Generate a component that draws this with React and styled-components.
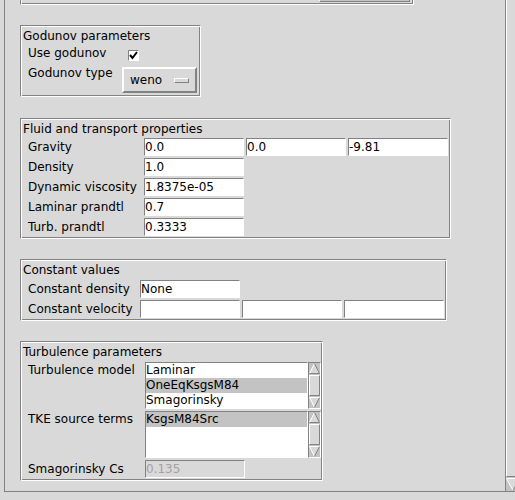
import React from "react";
import styled, { createGlobalStyle } from "styled-components";

const BG = "#d9d9d9";
const DARK = "#828282";
const LIGHT = "#ffffff";
const TROUGH = "#c3c3c3";

const Global = createGlobalStyle`
  html, body { margin: 0; padding: 0; background: ${BG}; }
  body { font-family: "DejaVu Sans", sans-serif; font-size: 12px; color: #000; }
  * { box-sizing: border-box; }
`;

const Screen = styled.div`
  width: 515px;
  height: 500px;
  background: ${BG};
  overflow: hidden;
`;

const Viewport = styled.div`
  margin-left: 4px;
  width: 511px;
  height: 492px;
  border-left: 1px solid ${DARK};
  border-bottom: 1px solid ${DARK};
  display: flex;
  overflow: hidden;
`;

const Canvas = styled.div`
  flex: 0 0 500px;
  display: flex;
  flex-direction: column;
  align-items: flex-start;
  padding-left: 15px;
  overflow: hidden;
`;

const TopTail = styled.div`
  width: 394px;
  height: 5px;
  border: 1px solid;
  border-top: none;
  border-color: ${DARK} ${LIGHT} ${LIGHT} ${DARK};
  box-shadow: inset 1px 0 0 ${LIGHT}, inset -1px -1px 0 ${DARK};
  display: flex;
`;

const TailWidget = styled.div`
  margin-left: 298px;
  width: 91px;
  height: 2px;
  border-bottom: 1px solid ${DARK};
  border-left: 1px solid ${LIGHT};
  border-right: 1px solid ${DARK};
  background: ${TROUGH};
`;

const Group = styled.div`
  margin-top: ${(p) => p.$top}px;
  border: 1px solid;
  border-color: ${DARK} ${LIGHT} ${LIGHT} ${DARK};
  box-shadow: inset 1px 1px 0 ${LIGHT}, inset -1px -1px 0 ${DARK};
  padding: 1px;
  display: flex;
  flex-direction: column;
`;

const Title = styled.div`
  height: 14px;
  line-height: 14px;
  margin: 2px 0 ${(p) => p.$mb}px 1px;
  white-space: nowrap;
`;

const Row = styled.div`
  display: flex;
  align-items: flex-start;
  height: ${(p) => p.$h}px;
`;

const RowLabel = styled.div`
  width: ${(p) => p.$w}px;
  flex: 0 0 auto;
  padding-left: 6px;
  margin-top: ${(p) => p.$mt}px;
  height: 14px;
  line-height: 14px;
  white-space: nowrap;
`;

const Check = styled.div`
  margin: 7px 0 0 6px;
  width: 11px;
  height: 11px;
  background: #fff;
  border: 1px solid;
  border-color: ${DARK} ${LIGHT} ${LIGHT} ${DARK};
  display: flex;
  align-items: center;
  justify-content: center;
`;

const MenuButton = styled.div`
  margin-top: 3px;
  width: 75px;
  height: 26px;
  border: 2px solid;
  border-color: ${LIGHT} ${DARK} ${DARK} ${LIGHT};
  display: flex;
  align-items: center;
  padding-left: 6px;
  line-height: 14px;
`;

const Indicator = styled.div`
  margin-left: auto;
  margin-right: 6px;
  width: 15px;
  height: 5px;
  border: 1px solid;
  border-color: ${LIGHT} ${DARK} ${DARK} ${LIGHT};
  background: ${BG};
`;

const Spacer = styled.div`
  width: ${(p) => p.$w}px;
  flex: 0 0 auto;
`;

const Form = styled.div`
  display: grid;
  grid-template-columns: ${(p) => p.$first}px repeat(3, 102px);
  grid-auto-rows: 20px;
  align-items: center;
`;

const FieldLabel = styled.div`
  grid-column: 1;
  padding-left: 6px;
  height: 14px;
  line-height: 14px;
  white-space: nowrap;
  align-self: ${(p) => (p.$top ? "start" : "center")};
  margin-top: ${(p) => (p.$top ? 2 : 0)}px;
`;

const EntryRing = styled.div`
  width: 102px;
  height: 20px;
  padding: 1px;
`;

const EntryBox = styled.div`
  width: 100%;
  height: 100%;
  border: 1px solid;
  border-color: ${DARK} ${LIGHT} ${LIGHT} ${DARK};
  background: ${(p) => (p.$disabled ? BG : "#fff")};
  color: ${(p) => (p.$disabled ? "#a3a3a3" : "#000")};
  line-height: 16px;
  padding-left: 0px;
  white-space: nowrap;
  overflow: hidden;
`;

const Entry = ({ value = "", disabled }) => (
  <EntryRing>
    <EntryBox $disabled={disabled}>{value}</EntryBox>
  </EntryRing>
);

const TurbForm = styled.div`
  display: grid;
  grid-template-columns: 122px 177px;
  grid-template-rows: 49px 49px 20px;
  align-items: center;
`;

const ListWrap = styled.div`
  display: flex;
  align-self: stretch;
  padding: 1px 0 1px 1px;
`;

const ListBox = styled.div`
  width: 163px;
  height: 47px;
  border: 1px solid;
  border-color: ${DARK} ${LIGHT} ${LIGHT} ${DARK};
  background: #fff;
  overflow: hidden;
`;

const ListItem = styled.div`
  height: 15px;
  line-height: 15px;
  padding-left: 0px;
  white-space: nowrap;
  background: ${(p) => (p.$sel ? TROUGH : "transparent")};
`;

const SBar = styled.div`
  width: 13px;
  height: 47px;
  border: 1px solid;
  border-color: ${DARK} ${LIGHT} ${LIGHT} ${DARK};
  background: ${TROUGH};
  display: flex;
  flex-direction: column;
`;

const Slider = styled.div`
  flex: 1;
  margin: 1px 0;
  background: ${BG};
  border: 1px solid;
  border-color: ${LIGHT} ${DARK} ${DARK} ${LIGHT};
`;

const PageScroll = styled.div`
  flex: 0 0 15px;
  height: 491px;
  border-left: 1px solid ${DARK};
  background: ${TROUGH};
  display: flex;
  flex-direction: column;
`;

const PageSlider = styled.div`
  flex: 1;
  background: ${BG};
  border: 1px solid;
  border-top: none;
  border-color: ${LIGHT} ${DARK} ${DARK} ${LIGHT};
  margin-bottom: 1px;
`;

function Arrow({ dir, w = 11, h = 11 }) {
  const up = dir === "up";
  const tip = up ? [w / 2, 0.5] : [w / 2, h - 0.5];
  const a = up ? [0.5, h - 0.5] : [0.5, 0.5];
  const b = up ? [w - 0.5, h - 0.5] : [w - 0.5, 0.5];
  return (
    <svg width={w} height={h} viewBox={`0 0 ${w} ${h}`} style={{ display: "block", flex: "0 0 auto" }}>
      <polygon points={`${tip} ${a} ${b}`} fill={BG} />
      <line x1={a[0]} y1={a[1]} x2={tip[0]} y2={tip[1]} stroke={LIGHT} strokeWidth="1" />
      <line x1={b[0]} y1={b[1]} x2={tip[0]} y2={tip[1]} stroke={DARK} strokeWidth="1" />
      <line x1={a[0]} y1={a[1]} x2={b[0]} y2={b[1]} stroke={up ? DARK : LIGHT} strokeWidth="1" />
    </svg>
  );
}

const Scrollbar = () => (
  <SBar>
    <Arrow dir="up" />
    <Slider />
    <Arrow dir="down" />
  </SBar>
);

const CheckMark = () => (
  <svg width="9" height="9" viewBox="0 0 9 9" style={{ display: "block" }}>
    <polyline points="1,4 3.5,7 8,1" fill="none" stroke="#000" strokeWidth="2" />
  </svg>
);

export default function App() {
  return (
    <Screen>
      <Global />
      <Viewport>
        <Canvas>
          <TopTail>
            <TailWidget />
          </TopTail>

          <Group $top={20}>
            <Title $mb={0}>Godunov parameters</Title>
            <Row $h={21}>
              <RowLabel $w={100} $mt={3}>Use godunov</RowLabel>
              <Check>
                <CheckMark />
              </Check>
            </Row>
            <Row $h={31}>
              <RowLabel $w={100} $mt={2}>Godunov type</RowLabel>
              <MenuButton>
                <span>weno</span>
                <Indicator />
              </MenuButton>
              <Spacer $w={2} />
            </Row>
          </Group>

          <Group $top={21}>
            <Title $mb={1}>Fluid and transport properties</Title>
            <Form $first={121}>
              <FieldLabel>Gravity</FieldLabel>
              <Entry value="0.0" />
              <Entry value="0.0" />
              <Entry value="-9.81" />
              <FieldLabel>Density</FieldLabel>
              <Entry value="1.0" />
              <FieldLabel>Dynamic viscosity</FieldLabel>
              <Entry value="1.8375e-05" />
              <FieldLabel>Laminar prandtl</FieldLabel>
              <Entry value="0.7" />
              <FieldLabel>Turb. prandtl</FieldLabel>
              <Entry value="0.3333" />
            </Form>
          </Group>

          <Group $top={20}>
            <Title $mb={2}>Constant values</Title>
            <Form $first={117}>
              <FieldLabel>Constant density</FieldLabel>
              <Entry value="None" />
              <FieldLabel>Constant velocity</FieldLabel>
              <Entry />
              <Entry />
              <Entry />
            </Form>
          </Group>

          <Group $top={20}>
            <Title $mb={2}>Turbulence parameters</Title>
            <TurbForm>
              <FieldLabel $top>Turbulence model</FieldLabel>
              <ListWrap>
                <ListBox>
                  <ListItem>Laminar</ListItem>
                  <ListItem $sel>OneEqKsgsM84</ListItem>
                  <ListItem>Smagorinsky</ListItem>
                </ListBox>
                <Scrollbar />
              </ListWrap>
              <FieldLabel $top>TKE source terms</FieldLabel>
              <ListWrap>
                <ListBox>
                  <ListItem $sel>KsgsM84Src</ListItem>
                </ListBox>
                <Scrollbar />
              </ListWrap>
              <FieldLabel>Smagorinsky Cs</FieldLabel>
              <Entry value="0.135" disabled />
            </TurbForm>
          </Group>
        </Canvas>
        <PageScroll>
          <PageSlider />
          <Arrow dir="down" w={14} h={13} />
        </PageScroll>
      </Viewport>
    </Screen>
  );
}
